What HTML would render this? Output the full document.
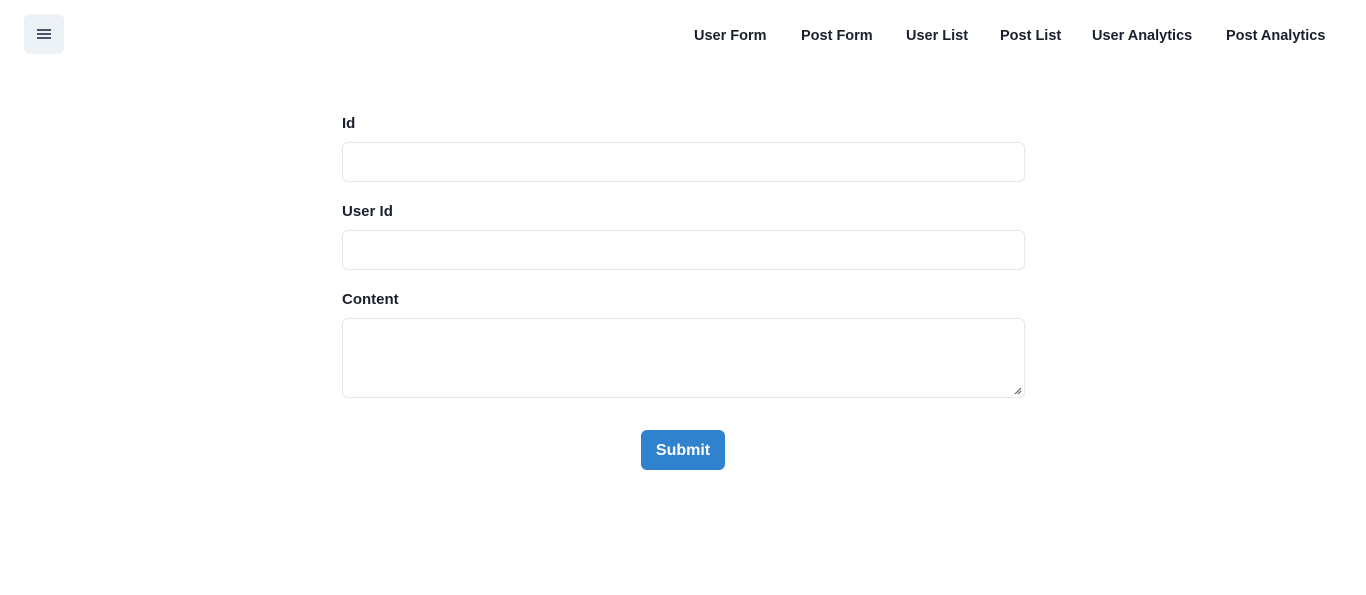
<!DOCTYPE html>
<html><head><meta charset="utf-8"><style>
*{box-sizing:border-box;margin:0;padding:0}
body{width:1366px;height:595px;background:#fff;font-family:"Liberation Sans",sans-serif;color:#1a202c;position:relative;overflow:hidden}
.menu{position:absolute;left:24px;top:14px;width:40px;height:40px;background:#edf2f7;border-radius:6px}
.menu i{position:absolute;left:13px;width:14px;height:2px;background:#4a5568}
.nav a{position:absolute;top:26px;font-size:14.5px;font-weight:600;color:#1a202c;text-decoration:none;white-space:nowrap;line-height:20px}
label{position:absolute;left:342px;font-size:15px;font-weight:600;line-height:20px}
.in{position:absolute;left:342px;width:683px;border:1px solid #e2e8f0;border-radius:6px;background:#fff}
.btn{position:absolute;left:641px;top:430px;width:84px;height:40px;background:#3182ce;border-radius:6px;color:#fff;font-weight:700;font-size:16px;line-height:41px;text-align:center}
</style></head><body>
<div class="menu"><i style="top:15px"></i><i style="top:19px"></i><i style="top:23px"></i></div>
<div class="nav">
<a style="left:694px">User Form</a>
<a style="left:801px">Post Form</a>
<a style="left:906px">User List</a>
<a style="left:1000px">Post List</a>
<a style="left:1092px">User Analytics</a>
<a style="left:1226px">Post Analytics</a>
</div>
<label style="top:114px">Id</label>
<div class="in" style="top:142px;height:40px"></div>
<label style="top:202px">User Id</label>
<div class="in" style="top:230px;height:40px"></div>
<label style="top:290px">Content</label>
<div class="in" style="top:318px;height:80px">
<svg style="position:absolute;right:2px;bottom:2px" width="8" height="8"><path d="M1 7L7 1M4 7L7 4" stroke="#555" stroke-width="1"/></svg>
</div>
<div class="btn">Submit</div>
</body></html>
